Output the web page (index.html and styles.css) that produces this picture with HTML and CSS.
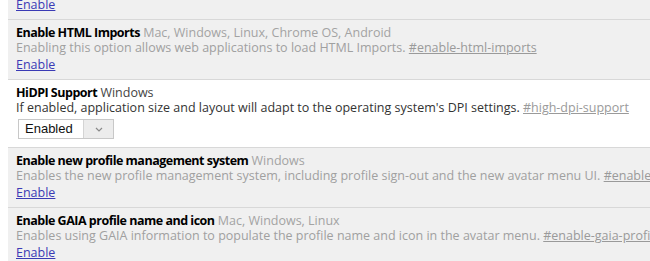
FILE: index.html
```html
<!DOCTYPE html>
<html lang="en">
<head>
    <meta charset="UTF-8">
    <title>Experiments</title>
    <link rel="stylesheet" href="styles.css">
</head>
<body>

    <div class="experiments">

        <div class="experiment disabled first">
            <a class="action" href="#">Enable</a>
        </div>

        <div class="experiment disabled">
            <div class="experiment-header">
                <span class="experiment-name">Enable HTML Imports</span>
                <span class="platforms">Mac, Windows, Linux, Chrome OS, Android</span>
            </div>
            <div class="description">Enabling this option allows web applications to load HTML Imports. <a class="permalink" href="#">#enable-html-imports</a></div>
            <a class="action" href="#">Enable</a>
        </div>

        <div class="experiment enabled">
            <div class="experiment-header">
                <span class="experiment-name">HiDPI Support</span>
                <span class="platforms">Windows</span>
            </div>
            <div class="description">If enabled, application size and layout will adapt to the operating system's DPI settings. <a class="permalink" href="#">#high-dpi-support</a></div>
            <div class="select">
                <span class="select-value">Enabled</span>
                <span class="select-arrow">
                    <svg width="8" height="5" viewBox="0 0 8 5"><path d="M1 1 L4 4 L7 1" fill="none" stroke="#8a8a8a" stroke-width="1.2"/></svg>
                </span>
            </div>
        </div>

        <div class="experiment disabled">
            <div class="experiment-header">
                <span class="experiment-name">Enable new profile management system</span>
                <span class="platforms">Windows</span>
            </div>
            <div class="description">Enables the new profile management system, including profile sign-out and the new avatar menu UI. <a class="permalink" href="#">#enable-new-profile-management</a></div>
            <a class="action" href="#">Enable</a>
        </div>

        <div class="experiment disabled">
            <div class="experiment-header">
                <span class="experiment-name">Enable GAIA profile name and icon</span>
                <span class="platforms">Mac, Windows, Linux</span>
            </div>
            <div class="description">Enables using GAIA information to populate the profile name and icon in the avatar menu. <a class="permalink" href="#">#enable-gaia-profile-info</a></div>
            <a class="action" href="#">Enable</a>
        </div>

    </div>

</body>
</html>
```

FILE: styles.css
```css
/* Base styling */
body {
    font-family: 'Open Sans', 'Noto Sans', sans-serif;
    font-size: 12.5px;
    line-height: 15px;
    background-color: #fff;
    color: #000;
    margin: 0;
    overflow: hidden;
}

.experiments {
    margin-left: 8px;
    white-space: nowrap;
}

.experiment {
    padding: 5px 8px 7px;
    border-top: 1px solid #d8d8d8;
}

.experiment.first {
    margin-top: -5px;
    padding-top: 0;
    border-top: none;
}

.experiment.disabled {
    background-color: #f0f0f0;
}

.experiment.enabled {
    background-color: #fff;
    padding-bottom: 8px;
}

.experiment-name {
    font-weight: 700;
    letter-spacing: -0.5px;
}

.platforms {
    color: #a3a3a3;
}

.enabled .platforms {
    color: #444;
}

.description {
    color: #a0a0a0;
}

.enabled .description {
    color: #333;
}

.permalink {
    color: #9a9a9a;
}

.action {
    display: inline-block;
    margin-top: 2px;
    color: #3b3bb5;
}

/* Select box */
.select {
    display: flex;
    width: 94px;
    height: 18px;
    margin: 4px 0 0 2px;
    border: 1px solid #c8c8c8;
    font-family: 'Liberation Sans', Arial, sans-serif;
    font-size: 13px;
    line-height: 18px;
}

.select-value {
    width: 58px;
    padding-left: 6px;
    background-color: #fff;
    color: #111;
}

.select-arrow {
    flex: 1;
    display: flex;
    align-items: center;
    justify-content: center;
    background-color: #ececec;
    border-left: 1px solid #d4d4d4;
}
```
